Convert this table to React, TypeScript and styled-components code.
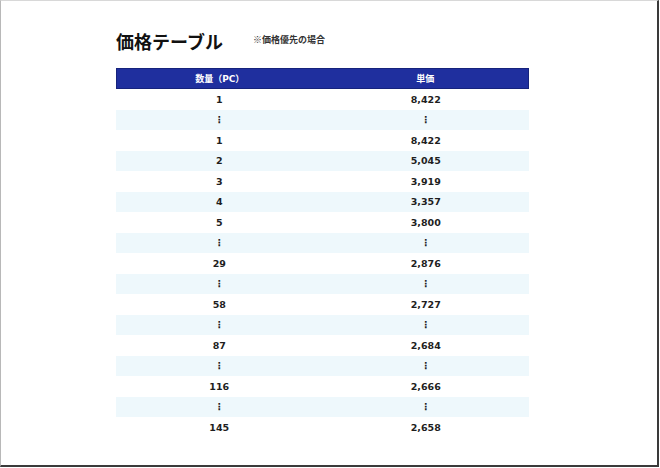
import React from "react";
import styled, {createGlobalStyle} from "styled-components";

const GlobalStyle = createGlobalStyle`
  html, body {
    margin: 0;
    padding: 0;
    background: #ffffff;
  }
  body {
    font-family: "DejaVu Sans", "Noto Sans CJK JP", sans-serif;
  }
`;

const Frame = styled.div`
  box-sizing: border-box;
  width: 659px;
  height: 467px;
  border-left: 1px solid #b8b8b8;
  border-top: 1px solid #d8d8d8;
  border-right: 2px solid #3a3a3a;
  border-bottom: 2px solid #3a3a3a;
  padding: 27px 0 0 115px;
`;

const TitleRow = styled.div`
  display: flex;
  align-items: center;
  gap: 30px;
  height: 28px;
`;

const Title = styled.h1`
  margin: 0;
  font-family: "Noto Sans CJK JP", sans-serif;
  font-size: 18px;
  font-weight: 700;
  color: #111;
  margin-top: -2px;
`;

const Note = styled.span`
  font-family: "Noto Sans CJK JP", sans-serif;
  font-size: 9px;
  font-weight: 700;
  color: #333;
  margin-top: -6px;
`;

const Table = styled.div`
  margin-top: 12px;
  width: 413px;
`;

const HeaderRow = styled.div`
  display: grid;
  grid-template-columns: 1fr 1fr;
  height: 21px;
  box-sizing: border-box;
  background: #1f2f9e;
  border: 1px solid #16237c;
  align-items: center;
`;

const HeaderCell = styled.div`
  text-align: center;
  color: #ffffff;
  font-family: "DejaVu Sans", "Noto Sans CJK JP", sans-serif;
  font-size: 9px;
  font-weight: 700;
`;

const Row = styled.div<{striped: boolean}>`
  display: grid;
  grid-template-columns: 1fr 1fr;
  height: 20.5px;
  align-items: center;
  background: ${(p) => (p.striped ? "#eef8fc" : "#ffffff")};
`;

const Cell = styled.div`
  text-align: center;
  color: #1e1e1e;
  font-family: "DejaVu Sans", sans-serif;
  font-size: 9.5px;
  font-weight: 700;
`;

const rows: [string, string][] = [
    ["1", "8,422"],
    ["⋮", "⋮"],
    ["1", "8,422"],
    ["2", "5,045"],
    ["3", "3,919"],
    ["4", "3,357"],
    ["5", "3,800"],
    ["⋮", "⋮"],
    ["29", "2,876"],
    ["⋮", "⋮"],
    ["58", "2,727"],
    ["⋮", "⋮"],
    ["87", "2,684"],
    ["⋮", "⋮"],
    ["116", "2,666"],
    ["⋮", "⋮"],
    ["145", "2,658"],
];

const App = () => {
    return (
        <>
            <GlobalStyle />
            <Frame>
                <TitleRow>
                    <Title>価格テーブル</Title>
                    <Note>※価格優先の場合</Note>
                </TitleRow>
                <Table>
                    <HeaderRow>
                        <HeaderCell>数量（PC）</HeaderCell>
                        <HeaderCell>単価</HeaderCell>
                    </HeaderRow>
                    {rows.map(([qty, price], i) => (
                        <Row key={i} striped={i % 2 === 1}>
                            <Cell>{qty}</Cell>
                            <Cell>{price}</Cell>
                        </Row>
                    ))}
                </Table>
            </Frame>
        </>
    );
};

export default App;
